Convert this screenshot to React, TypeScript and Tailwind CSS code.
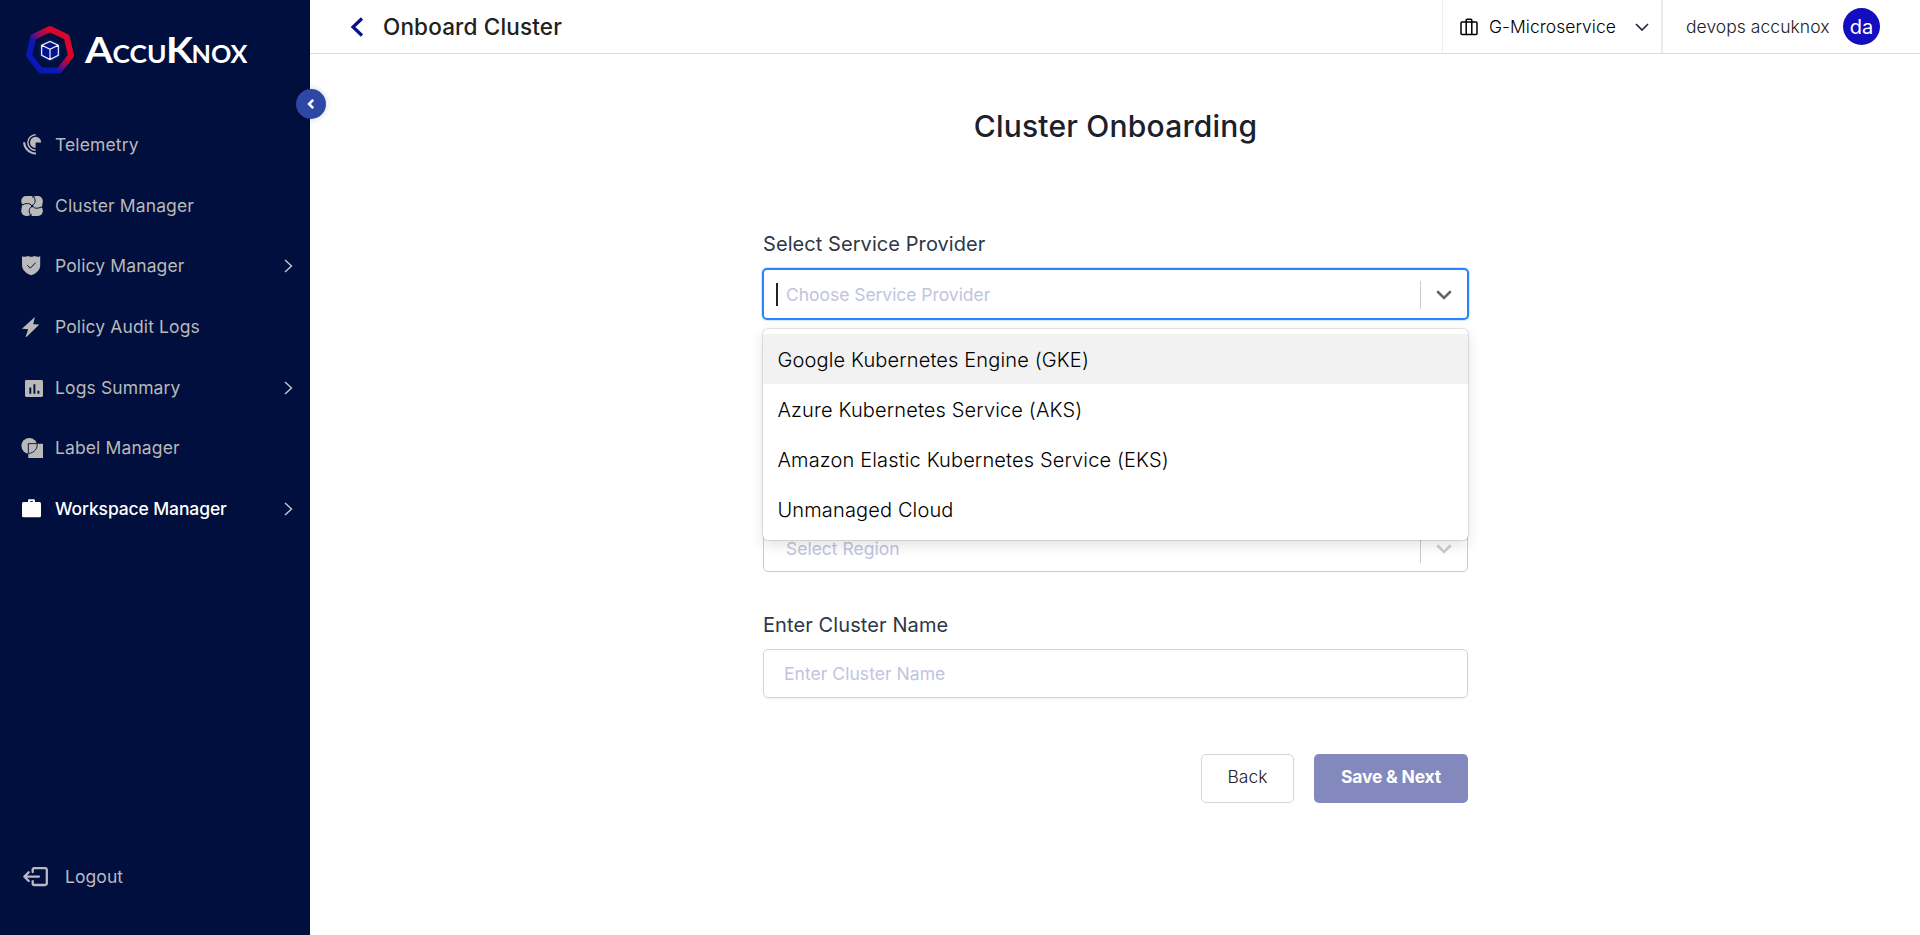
import React from "react";

const INK = "#000f3d";

function TelemetryIcon() {
  return (
    <svg viewBox="0 0 24 24" className="size-6" fill="none">
      <path d="M15.6 9.4V15A5.6 5.6 0 1 1 21.2 9.4Z" fill="currentColor" />
      <path d="M15.7 1.700A7.800 7.800 0 0 0 15.7 17.300" stroke="currentColor" strokeWidth="1.500" />
      <path d="M4.1 9.3A11.5 11.5 0 0 0 16 20.4" stroke="currentColor" strokeWidth="2" />
    </svg>
  );
}

function ClusterIcon() {
  return (
    <svg viewBox="0 0 24 24" className="size-6" fill="none">
      <rect x="1.3" y="2" width="11" height="10.2" rx="4.800" fill="currentColor" />
      <rect x="11.500" y="2" width="11.300" height="10.2" rx="4.800" fill="currentColor" />
      <rect x="1.3" y="11.6" width="11" height="10.4" rx="4.800" fill="currentColor" />
      <rect x="11.500" y="11.6" width="11.300" height="10.4" rx="4.800" fill="currentColor" />
      <path d="M7 2h5.500v6H7zM17.500 7.500h4.800v5.500h-4.800zM11.500 16.500h6V22h-6zM1.800 11h5v5h-5zM7 7h10v10H7z" fill="currentColor" />
      <path
        d="M12.2 11.500C16 9.500 16 5 12.800 1.800M12.500 12C14.500 15.200 19 14.600 23 12.100M12 12.500C8.300 14.200 8.500 18.800 11.300 22.200M12 12C10 8.500 5.500 9 1.200 11.600"
        stroke={INK}
        strokeWidth="1"
      />
      <circle cx="12.1" cy="12" r="1.200" fill={INK} />
    </svg>
  );
}

function ShieldIcon() {
  return (
    <svg viewBox="0 0 24 24" className="size-6" fill="none">
      <path d="M2 2.300C4.500 3.200 6 2.900 8 2.100 9.500 3.100 13 3.100 14.500 2.100 16.500 2.900 18 3.200 20.200 2.300V11C20.200 16 16.500 19.500 11.200 21.300 6 19.500 2 16 2 11Z" fill="currentColor" />
      <path d="M7.300 11.200l3 3 5.400-5.600" stroke={INK} strokeWidth="1" />
    </svg>
  );
}

function BoltIcon() {
  return (
    <svg viewBox="0 0 24 24" className="size-6" fill="none">
      <path d="M14.900 1.900L1.900 13.700 8.200 14.300 5.500 22 7 21.600 19.300 9.600 13.200 9.200Z" fill="currentColor" />
    </svg>
  );
}

function LogsIcon() {
  return (
    <svg viewBox="0 0 24 24" className="size-6" fill="none">
      <rect x="5" y="4" width="18" height="17" rx="1.400" fill="currentColor" />
      <path d="M10.300 11.500v6.300M14.400 8.300v9.500M18.400 14.800v3" stroke={INK} strokeWidth="1.900" />
    </svg>
  );
}

function LabelIcon() {
  return (
    <svg viewBox="0 0 24 24" className="size-6" fill="none">
      <circle cx="9.300" cy="9.800" r="7.900" fill="currentColor" />
      <path d="M8.300 7.800H23V22H8.300Z" fill="currentColor" />
      <path d="M8.300 17.500V7.600h8.700c1 4.500-2.500 9.500-8.700 9.900Z" stroke={INK} strokeWidth="0.900" />
    </svg>
  );
}

function BriefcaseIcon() {
  return (
    <svg viewBox="0 0 24 24" className="size-6" fill="none">
      <rect x="2" y="5" width="19" height="15.200" rx="1.500" fill="currentColor" />
      <path d="M9 6V3.200h5V6" stroke="currentColor" strokeWidth="1.900" strokeLinejoin="round" />
    </svg>
  );
}

function LogoutIcon() {
  return (
    <svg viewBox="0 0 26 22" width="26" height="22" fill="none" stroke="currentColor" strokeWidth="2.300" strokeLinecap="round" strokeLinejoin="round">
      <path d="M9.700 6V3.800a1.600 1.600 0 0 1 1.600-1.600H22.200A1.600 1.600 0 0 1 23.800 3.800V17.400A1.600 1.600 0 0 1 22.200 19H11.300a1.600 1.600 0 0 1-1.600-1.600V15.200" />
      <path d="M16 10.600H1.400M5.700 6.200L1.400 10.600l4.300 4.400" />
    </svg>
  );
}

function Logo() {
  return (
    <svg viewBox="0 0 230 60" width="230" height="60" fill="none">
      <defs>
        <linearGradient id="ring" x1="38" y1="14" x2="14" y2="34" gradientUnits="userSpaceOnUse">
          <stop offset="0.200" stopColor="#d80628" />
          <stop offset="0.500" stopColor="#8c0a66" />
          <stop offset="0.780" stopColor="#0a18b8" />
        </linearGradient>
        <filter id="glow" x="-50%" y="-50%" width="200%" height="200%">
          <feGaussianBlur stdDeviation="1.200" />
        </filter>
      </defs>
      <path d="M30 9L46.700 17 51 35.500 39.200 50.500H20.800L9 35.500 13.300 17Z" stroke="url(#ring)" strokeWidth="6" strokeLinejoin="round" />
      <path d="M30 21.500l8.500 4v9.800L30 40l-8.500-4.700v-9.800Z" fill="#0b3fb0" stroke="#1450d0" strokeWidth="1.500" filter="url(#glow)" />
      <path d="M30 21.400l8.300 3.800v10L30 39.500l-8.300-4.300v-10Z" fill="#04128f" />
      <path d="M30 21.400l8.300 3.800v10L30 39.500l-8.300-4.300v-10ZM21.700 25.200l8.300 4 8.300-4M30 29.200v10.300" stroke="#fff" strokeWidth="1.100" strokeLinejoin="round" />
      <g fill="#fff" fontFamily="Lato, sans-serif" fontWeight="700">
        <text x="65" y="43" fontSize="36.500" textLength="28" lengthAdjust="spacingAndGlyphs">A</text>
        <text x="92.500" y="43" fontSize="25" textLength="54" lengthAdjust="spacingAndGlyphs">CCU</text>
        <text x="146" y="43" fontSize="36.500" textLength="27" lengthAdjust="spacingAndGlyphs">K</text>
        <text x="171.500" y="43" fontSize="25" textLength="56" lengthAdjust="spacingAndGlyphs">NOX</text>
      </g>
    </svg>
  );
}

const NAV = [
  { label: "Telemetry", Icon: TelemetryIcon, more: false, active: false },
  { label: "Cluster Manager", Icon: ClusterIcon, more: false, active: false },
  { label: "Policy Manager", Icon: ShieldIcon, more: true, active: false },
  { label: "Policy Audit Logs", Icon: BoltIcon, more: false, active: false },
  { label: "Logs Summary", Icon: LogsIcon, more: true, active: false },
  { label: "Label Manager", Icon: LabelIcon, more: false, active: false },
  { label: "Workspace Manager", Icon: BriefcaseIcon, more: true, active: true },
];

function Sidebar() {
  return (
    <aside className="relative flex w-[310px] shrink-0 flex-col bg-[#000f3d]">
      <div className="h-[114.600px] pl-5 pt-5">
        <Logo />
      </div>
      <nav className="flex flex-col">
        {NAV.map(({ label, Icon, more, active }) => (
          <a
            key={label}
            className={
              "flex h-[60.7px] items-center pl-5 pr-[17px] text-[17.5px] " +
              (active ? "font-medium tracking-[-0.12px] text-white" : "tracking-[0.12px] text-[#b9b9b9]")
            }
          >
            <Icon />
            <span className="ml-[11px] flex-1">{label}</span>
            {more && (
              <svg viewBox="0 0 9 14" width="9" height="14" fill="none" className="text-[#c8c9ce]">
                <path d="M1 1l6.500 6L1 13" stroke="currentColor" strokeWidth="1.400" />
              </svg>
            )}
          </a>
        ))}
      </nav>
      <a className="mt-auto mb-[45px] flex items-center pl-[23px] text-[17.5px] tracking-[0.08px] text-[#b9b9c1]">
        <LogoutIcon />
        <span className="ml-4">Logout</span>
      </a>
      <button className="absolute left-[296px] top-[89px] flex size-[30px] items-center justify-center rounded-full bg-[#2d47a5] shadow-[0_0_6px_rgba(0,0,0,0.2)]">
        <svg viewBox="0 0 8 10" width="8" height="10" fill="none">
          <path d="M6.200 0.800L2 5l4.200 4.200" stroke="#fff" strokeWidth="2.500" />
        </svg>
      </button>
    </aside>
  );
}

function Header() {
  return (
    <header className="flex h-[54px] shrink-0 items-stretch border-b border-[#dcdcdc]">
      <div className="flex flex-1 items-center pl-10">
        <svg viewBox="0 0 14 20" width="14" height="20" fill="none">
          <path d="M12 1.500L3 10l9 8.500" stroke="#06118a" strokeWidth="3.200" />
        </svg>
        <h1 className="ml-[19px] text-[22.5px] font-medium tracking-[0.16px] text-[#212121]">Onboard Cluster</h1>
      </div>
      <div className="flex w-[221px] items-center border-l border-r-2 border-[#ececec] pl-[17px] text-[17.5px] font-light text-black">
        <svg viewBox="0 0 18 18" width="18" height="18" fill="none" stroke="currentColor" strokeWidth="1.500" strokeLinejoin="round">
          <rect x="1" y="4" width="16" height="12.500" rx="1" />
          <path d="M6.200 16.500V2.200a1 1 0 0 1 1-1h3.600a1 1 0 0 1 1 1V16.500" />
        </svg>
        <span className="ml-[11px] flex-1 pt-px tracking-[0.04px]">G-Microservice</span>
        <svg viewBox="0 0 14 8" width="14" height="8" fill="none" className="mr-[12px]">
          <path d="M1 1l6 6 6-6" stroke="#222b3a" strokeWidth="1.700" />
        </svg>
      </div>
      <div className="flex w-[257px] items-center pl-[23px] text-[17.5px] font-light text-[#212121]">
        <span className="w-[157px] pt-px tracking-[0.04px]">devops accuknox</span>
        <span className="flex size-[37px] items-center justify-center rounded-full bg-[#140cbf] text-xl font-normal text-white">da</span>
      </div>
    </header>
  );
}

const OPTIONS = [
  "Google Kubernetes Engine (GKE)",
  "Azure Kubernetes Service (AKS)",
  "Amazon Elastic Kubernetes Service (EKS)",
  "Unmanaged Cloud",
];

function SelectChevron({ className }: { className: string }) {
  return (
    <>
      <span className="h-7 w-px bg-[#cccccc]" />
      <svg viewBox="0 0 16 10" width="16" height="10" fill="none" className={className}>
        <path d="M2 2l6 6 6-6" stroke="currentColor" strokeWidth="2.600" strokeLinecap="round" />
      </svg>
    </>
  );
}

function Form() {
  return (
    <form className="ml-[452px] flex w-[707px] flex-col">
      <h2 className="mt-[50px] text-center text-[30px] leading-[44px] font-medium tracking-[0.22px] text-[#1a202c]">
        Cluster Onboarding
      </h2>
      <label className="mt-[81px] ml-px text-xl leading-[30px] tracking-[0.07px] text-[#2d3748]">Select Service Provider</label>
      <div className="relative mt-[9px]">
        <div className="flex h-[52px] items-center rounded-[5px] border-2 border-[#2684ff] bg-white pt-px pl-3 text-[17.5px] tracking-[-0.04px] text-[#c1c4de] shadow-[0_0_0_1px_rgba(38,132,255,0.2)]">
          <span className="h-[23px] w-0.5 bg-[#222222]" />
          <span className="ml-2 flex-1 pt-px">Choose Service Provider</span>
          <SelectChevron className="mt-px mr-[15px] ml-[15px] text-[#666666]" />
        </div>
        <ul className="absolute top-[61px] left-px z-10 w-[705px] rounded-[5px] bg-white pt-[5px] pb-[6px] text-xl font-light tracking-[0.14px] text-black shadow-[0_0_0_1px_rgba(0,0,0,0.1),0_5px_14px_rgba(0,0,0,0.12)]">
          {OPTIONS.map((option, i) => (
            <li key={option} className={"flex h-[50px] items-center px-[14.5px] pt-px " + (i === 0 ? "bg-[#f2f2f2]" : "")}>
              {option}
            </li>
          ))}
        </ul>
      </div>
      <div className="mx-px mt-[204px] flex h-12 items-center rounded-[5px] border border-[#cccccc] bg-white pt-px pl-[22px] text-[17.5px] text-[#c1c4de]">
        <span className="flex-1 pt-px">Select Region</span>
        <SelectChevron className="mr-[15px] ml-[15px] text-[#cccccc]" />
      </div>
      <label className="mt-[38px] ml-px text-xl leading-[30px] tracking-[0.1px] text-[#2d3748]">Enter Cluster Name</label>
      <div className="mx-px mt-[9px] flex h-[49px] items-center rounded-[5px] border border-[#d2d3df] bg-white pt-px pl-5 text-[17.5px] tracking-[0.04px] text-[#c1c4de] shadow-[0_1px_2px_rgba(0,0,0,0.05)]">
        Enter Cluster Name
      </div>
      <div className="mt-14 mr-px flex justify-end gap-5 text-[17.5px]">
        <button type="button" className="h-[49px] w-[93px] rounded-[5px] border border-[#d6d6d6] bg-white pb-0.5 font-light text-[#212121]">
          Back
        </button>
        <button type="button" className="h-[49px] w-[154px] rounded-[5px] bg-[#8389bd] pb-0.5 font-bold tracking-[-0.2px] text-white">
          Save &amp; Next
        </button>
      </div>
    </form>
  );
}

export default function App() {
  return (
    <div className="flex h-[935px] w-full overflow-hidden bg-white font-[Inter,sans-serif]">
      <Sidebar />
      <main className="flex flex-1 flex-col">
        <Header />
        <Form />
      </main>
    </div>
  );
}
